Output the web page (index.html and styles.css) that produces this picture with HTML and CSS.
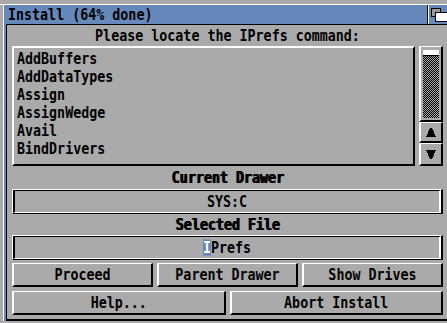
FILE: index.html
```html
<!DOCTYPE html>
<html lang="en">
<head>
    <meta charset="UTF-8">
    <meta name="viewport" content="width=device-width, initial-scale=1.0">
    <title>Install</title>
    <link rel="stylesheet" href="styles.css">
</head>
<body>
    <div class="screen-bar"></div>
    <div class="window">
        <div class="frame">
            <div class="titlebar">
                <div class="title"><span class="t">Install (64% done)</span></div>
                <div class="depth">
                    <svg width="23" height="19" viewBox="0 0 23 19" shape-rendering="crispEdges">
                        <rect x="3.5" y="3.5" width="9" height="8" fill="#999999" stroke="#000"/>
                        <rect x="7.5" y="7.5" width="13" height="9" fill="#fff" stroke="#000"/>
                    </svg>
                </div>
            </div>

            <div class="panel">
                <div class="prompt"><span class="t">Please locate the IPrefs command:</span></div>

                <div class="browser">
                    <ul class="listview">
                        <li><span class="t">AddBuffers</span></li>
                        <li><span class="t">AddDataTypes</span></li>
                        <li><span class="t">Assign</span></li>
                        <li><span class="t">AssignWedge</span></li>
                        <li><span class="t">Avail</span></li>
                        <li><span class="t">BindDrivers</span></li>
                    </ul>
                    <div class="scroller">
                        <div class="prop"><div class="knob"></div></div>
                        <button class="arrow">
                            <svg width="10" height="9" viewBox="0 0 10 9" shape-rendering="crispEdges">
                                <polygon points="4,0 6,0 10,9 0,9" fill="#000"/>
                            </svg>
                        </button>
                        <button class="arrow arrow-down">
                            <svg width="10" height="9" viewBox="0 0 10 9" shape-rendering="crispEdges">
                                <polygon points="0,0 10,0 6,9 4,9" fill="#000"/>
                            </svg>
                        </button>
                    </div>
                </div>

                <div class="label"><span class="t">Current Drawer</span></div>
                <div class="string">
                    <div class="string-in"><span class="t">SYS:C</span></div>
                </div>

                <div class="label label-2"><span class="t">Selected File</span></div>
                <div class="string">
                    <div class="string-in"><span class="t"><span class="cursor">I</span>Prefs</span></div>
                </div>

                <div class="buttons three">
                    <button class="btn"><span class="t">Proceed</span></button>
                    <button class="btn"><span class="t">Parent Drawer</span></button>
                    <button class="btn"><span class="t">Show Drives</span></button>
                </div>
                <div class="buttons two">
                    <button class="btn"><span class="t">Help...</span></button>
                    <button class="btn"><span class="t">Abort Install</span></button>
                </div>
            </div>
        </div>
    </div>
</body>
</html>
```

FILE: styles.css
```css
* {
    box-sizing: border-box;
}

html, body {
    margin: 0;
    width: 447px;
    height: 323px;
    overflow: hidden;
}

body {
    background-color: #aaaaaa;
    font-family: "DejaVu Sans Mono", monospace;
    font-size: 13.33px;
    font-weight: bold;
    color: #000;
}

/* topaz is taller than it is wide */
.t {
    display: inline-block;
    transform: scaleY(1.25);
    white-space: pre;
}

.screen-bar {
    height: 5px;
    border-bottom: 1px solid #fff;
}

.window {
    margin-left: 3px;
    width: 448px;
    border-left: 1px solid #fff;
}

.frame {
    border-left: 2px solid #6688bb;
}

.titlebar {
    display: flex;
    height: 20px;
    background-color: #6688bb;
    border-bottom: 1px solid #000;
}

.title {
    flex: 1;
    padding-left: 2px;
    line-height: 19px;
}

.depth {
    width: 24px;
    height: 19px;
    border-left: 1px solid #000;
    box-shadow: inset 1px 0 #fff;
}

.depth svg {
    display: block;
}

.panel {
    border-left: 1px solid #000;
    border-bottom: 2px solid #000;
    padding: 0 8px 4px 5px;
}

.prompt,
.label {
    display: flex;
    align-items: center;
    justify-content: center;
    height: 21px;
}

.label {
    height: 23px;
    text-shadow: 1px 0 0 #000;
}

.label-2 {
    height: 21px;
}

.browser {
    display: flex;
    gap: 4px;
    height: 120px;
}

.listview {
    width: 403px;
    margin: 0;
    padding: 2px 0 0 3px;
    list-style: none;
    border-style: solid;
    border-width: 2px;
    border-color: #fff #000 #000 #fff;
}

.listview li {
    height: 18px;
    line-height: 18px;
}

.scroller {
    width: 24px;
    display: flex;
    flex-direction: column;
}

.prop {
    display: flex;
    height: 76px;
    border-style: solid;
    border-width: 1px 2px 2px 2px;
    border-color: #fff #000 #000 #fff;
    padding: 3px 2px 2px 2px;
}

.knob {
    flex: 1;
    border-top: 5px solid #fff;
    box-shadow: inset 0 1px #000;
    background: repeating-conic-gradient(#000 0 25%, #aaaaaa 0 50%) 0 0 / 2px 2px;
}

button {
    margin: 0;
    padding: 0;
    font: inherit;
    color: inherit;
    background-color: #aaaaaa;
    border-style: solid;
    border-width: 1px 2px 2px 2px;
    border-color: #fff #000 #000 #fff;
    border-radius: 0;
    appearance: none;
}

.arrow {
    display: flex;
    align-items: center;
    justify-content: center;
    height: 21px;
}

.arrow-down {
    height: 23px;
}

.arrow svg {
    display: block;
}

.string {
    height: 25px;
    border-style: solid;
    border-width: 1px 2px 1px 1px;
    border-color: #fff #000 #000 #fff;
}

.string-in {
    display: flex;
    align-items: center;
    justify-content: center;
    height: 100%;
    border-style: solid;
    border-width: 1px 2px 1px 2px;
    border-color: #000 #fff #fff #000;
}

.cursor {
    display: inline-block;
    height: 13px;
    line-height: 13px;
    background-color: #6688bb;
    color: #fff;
}

.buttons {
    display: grid;
    gap: 4px;
    height: 24px;
    margin-top: 3px;
}

.three {
    grid-template-columns: repeat(3, 1fr);
}

.two {
    grid-template-columns: 1fr 1fr;
    margin-top: 4px;
}

.btn {
    height: 24px;
}
```
